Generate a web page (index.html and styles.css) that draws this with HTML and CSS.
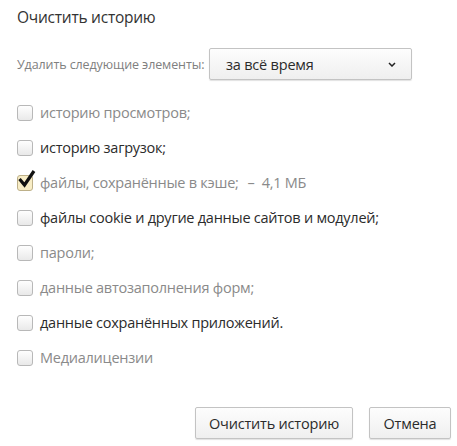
FILE: index.html
```html
<!DOCTYPE html>
<html lang="ru">
<head>
<meta charset="utf-8">
<link rel="stylesheet" href="styles.css">
</head>
<body>
<div class="dialog">
  <h1 class="title">Очистить историю</h1>
  <div class="range">
    <span class="range-label">Удалить следующие элементы:</span>
    <div class="select">
      <span class="select-text">за всё время</span>
      <svg class="chevron" width="8" height="5" viewBox="0 0 8 5"><path d="M1 1 L4 4 L7 1" fill="none" stroke="#222" stroke-width="1.5"/></svg>
    </div>
  </div>
  <ul class="list">
    <li class="item muted"><span class="box"></span>историю просмотров;</li>
    <li class="item"><span class="box"></span>историю загрузок;</li>
    <li class="item muted"><span class="box checked"><svg class="check" width="20" height="22" viewBox="0 0 20 22"><path d="M2.5 11 L7.5 17 L17 3" fill="none" stroke="#111" stroke-width="3.2" stroke-linejoin="miter"/></svg></span>файлы, сохранённые в кэше;<span class="size">–&nbsp; 4,1 МБ</span></li>
    <li class="item"><span class="box"></span>файлы cookie и другие данные сайтов и модулей;</li>
    <li class="item muted"><span class="box"></span>пароли;</li>
    <li class="item muted"><span class="box"></span>данные автозаполнения форм;</li>
    <li class="item"><span class="box"></span>данные сохранённых приложений.</li>
    <li class="item muted"><span class="box"></span>Медиалицензии</li>
  </ul>
  <div class="actions">
    <button class="btn btn-clear">Очистить историю</button>
    <button class="btn btn-cancel">Отмена</button>
  </div>
</div>
</body>
</html>
```

FILE: styles.css
```css
* { box-sizing: border-box; }
html, body { margin: 0; padding: 0; background: #fff; }
body { font-family: "Open Sans", "Noto Sans", sans-serif; color: #333; }
.dialog { width: 457px; height: 446px; padding: 7px 6px 0 17px; }
.title { margin: 0; font-size: 15.5px; font-weight: 400; line-height: 20px; color: #333; letter-spacing: -0.25px; }
.range { display: flex; align-items: center; margin-top: 21px; }
.range-label { font-size: 12.5px; color: #808080; width: 192px; letter-spacing: -0.1px; }
.select { display: flex; align-items: center; justify-content: space-between; width: 203px; height: 32px; padding: 0 15px 0 16px; border: 1px solid #c3c3c3; border-radius: 2px; background: linear-gradient(#fdfdfd, #efefef); box-shadow: 0 1px 1px rgba(0,0,0,0.12); }
.select-text { font-size: 14.5px; color: #2b2b2b; letter-spacing: -0.2px; }
.chevron { display: block; }
.list { list-style: none; margin: 15px 0 0; padding: 0; }
.item { display: flex; align-items: center; height: 35px; font-size: 14.5px; color: #2b2b2b; letter-spacing: -0.25px; }
.item.muted { color: #8a8a8a; }
.box { position: relative; flex: none; width: 16px; height: 16px; margin-right: 7px; border: 1px solid #b8b8b8; border-radius: 3px; background: linear-gradient(#fefefe, #e9e9e9); }
.box.checked { background: #f8edc6; border-color: #bdb089; }
.check { position: absolute; left: -1px; top: -8px; }
.size { margin-left: 9px; }
.actions { display: flex; justify-content: flex-end; gap: 16px; margin-top: 32px; }
.btn { height: 32px; padding: 0; font-family: inherit; font-size: 14.5px; color: #2b2b2b; letter-spacing: -0.2px; border: 1px solid #c3c3c3; border-radius: 2px; background: linear-gradient(#fdfdfd, #efefef); box-shadow: 0 1px 1px rgba(0,0,0,0.12); }
.btn-clear { width: 158px; }
.btn-cancel { width: 82px; }
```
